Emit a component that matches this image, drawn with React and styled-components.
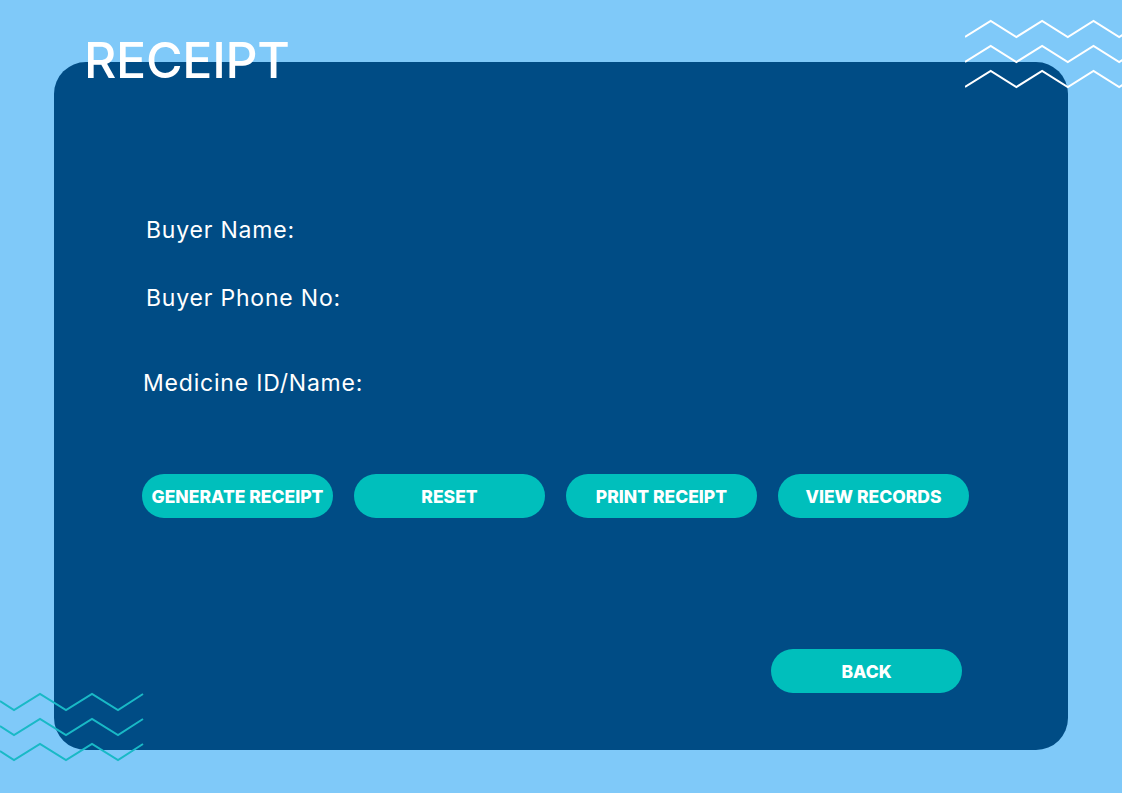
import React from "react";
import styled, { createGlobalStyle } from "styled-components";

const GlobalStyle = createGlobalStyle`
  html, body {
    margin: 0;
    padding: 0;
    background: #7fc9f9;
  }
  * {
    box-sizing: border-box;
  }
`;

const Page = styled.div`
  position: relative;
  width: 1122px;
  height: 793px;
  overflow: hidden;
  background: #7fc9f9;
  padding: 62px 54px 43px;
  font-family: Inter, Lato, "Noto Sans", sans-serif;
`;

const Panel = styled.div`
  display: flex;
  flex-direction: column;
  width: 1014px;
  height: 688px;
  background: #004c85;
  border-radius: 32px;
`;

const Title = styled.h1`
  margin: -32px 0 0 30px;
  font-size: 50px;
  line-height: 60px;
  font-weight: 500;
  color: #ffffff;
  letter-spacing: -0.3px;
`;

const Form = styled.div`
  display: flex;
  flex-direction: column;
  margin-top: 125px;
`;

const Label = styled.div`
  margin: ${({ $top }) => $top}px 0 0 ${({ $indent }) => $indent}px;
  font-size: 23px;
  line-height: 30px;
  color: #ffffff;
  letter-spacing: 0.8px;
`;

const ButtonRow = styled.div`
  display: flex;
  gap: 21px;
  margin: 76px 0 0 88px;
`;

const Button = styled.button`
  width: 191px;
  height: 44px;
  border: none;
  border-radius: 22px;
  background: #00bfbc;
  color: #ffffff;
  font-family: Inter, Lato, "Noto Sans", sans-serif;
  font-weight: 800;
  font-size: 17.5px;
  letter-spacing: 0;
  padding: 0;
  cursor: pointer;
`;

const BackButton = styled(Button)`
  align-self: flex-end;
  margin: 131px 106px 0 0;
`;

const Zigzag = styled.svg`
  position: absolute;
  pointer-events: none;
`;

const zig = (x0, y0, n, step, amp, startUp) => {
  let d = `M${x0} ${y0}`;
  let x = x0;
  let up = startUp;
  for (let i = 0; i < n; i++) {
    x += step;
    d += ` L${x} ${up ? y0 - amp : y0}`;
    up = !up;
  }
  return d;
};

const App = () => {
  return (
    <>
      <GlobalStyle />
      <Page>
        <Panel>
          <Title>RECEIPT</Title>
          <Form>
            <Label $top={0} $indent={92}>Buyer Name:</Label>
            <Label $top={38} $indent={92}>Buyer Phone No:</Label>
            <Label $top={55} $indent={89}>Medicine ID/Name:</Label>
          </Form>
          <ButtonRow>
            <Button>GENERATE RECEIPT</Button>
            <Button>RESET</Button>
            <Button>PRINT RECEIPT</Button>
            <Button>VIEW RECORDS</Button>
          </ButtonRow>
          <BackButton>BACK</BackButton>
        </Panel>

        <Zigzag
          width="160"
          height="80"
          viewBox="965 14 160 80"
          style={{ left: 965, top: 14 }}
        >
          {[37, 62, 87].map((y) => (
            <path
              key={y}
              d={zig(965, y, 7, 25.7, 16, true)}
              fill="none"
              stroke="#ffffff"
              strokeWidth="2"
            />
          ))}
        </Zigzag>

        <Zigzag
          width="150"
          height="80"
          viewBox="0 688 150 80"
          style={{ left: 0, top: 688 }}
        >
          {[0, 25, 50].map((dy) => (
            <path
              key={dy}
              d={`M0 ${701 + dy} L14 ${710 + dy} L40 ${694 + dy} L66 ${710 + dy} L92 ${694 + dy} L118 ${710 + dy} L143 ${694 + dy}`}
              fill="none"
              stroke="#19b9c6"
              strokeWidth="2"
            />
          ))}
        </Zigzag>
      </Page>
    </>
  );
};

export default App;
